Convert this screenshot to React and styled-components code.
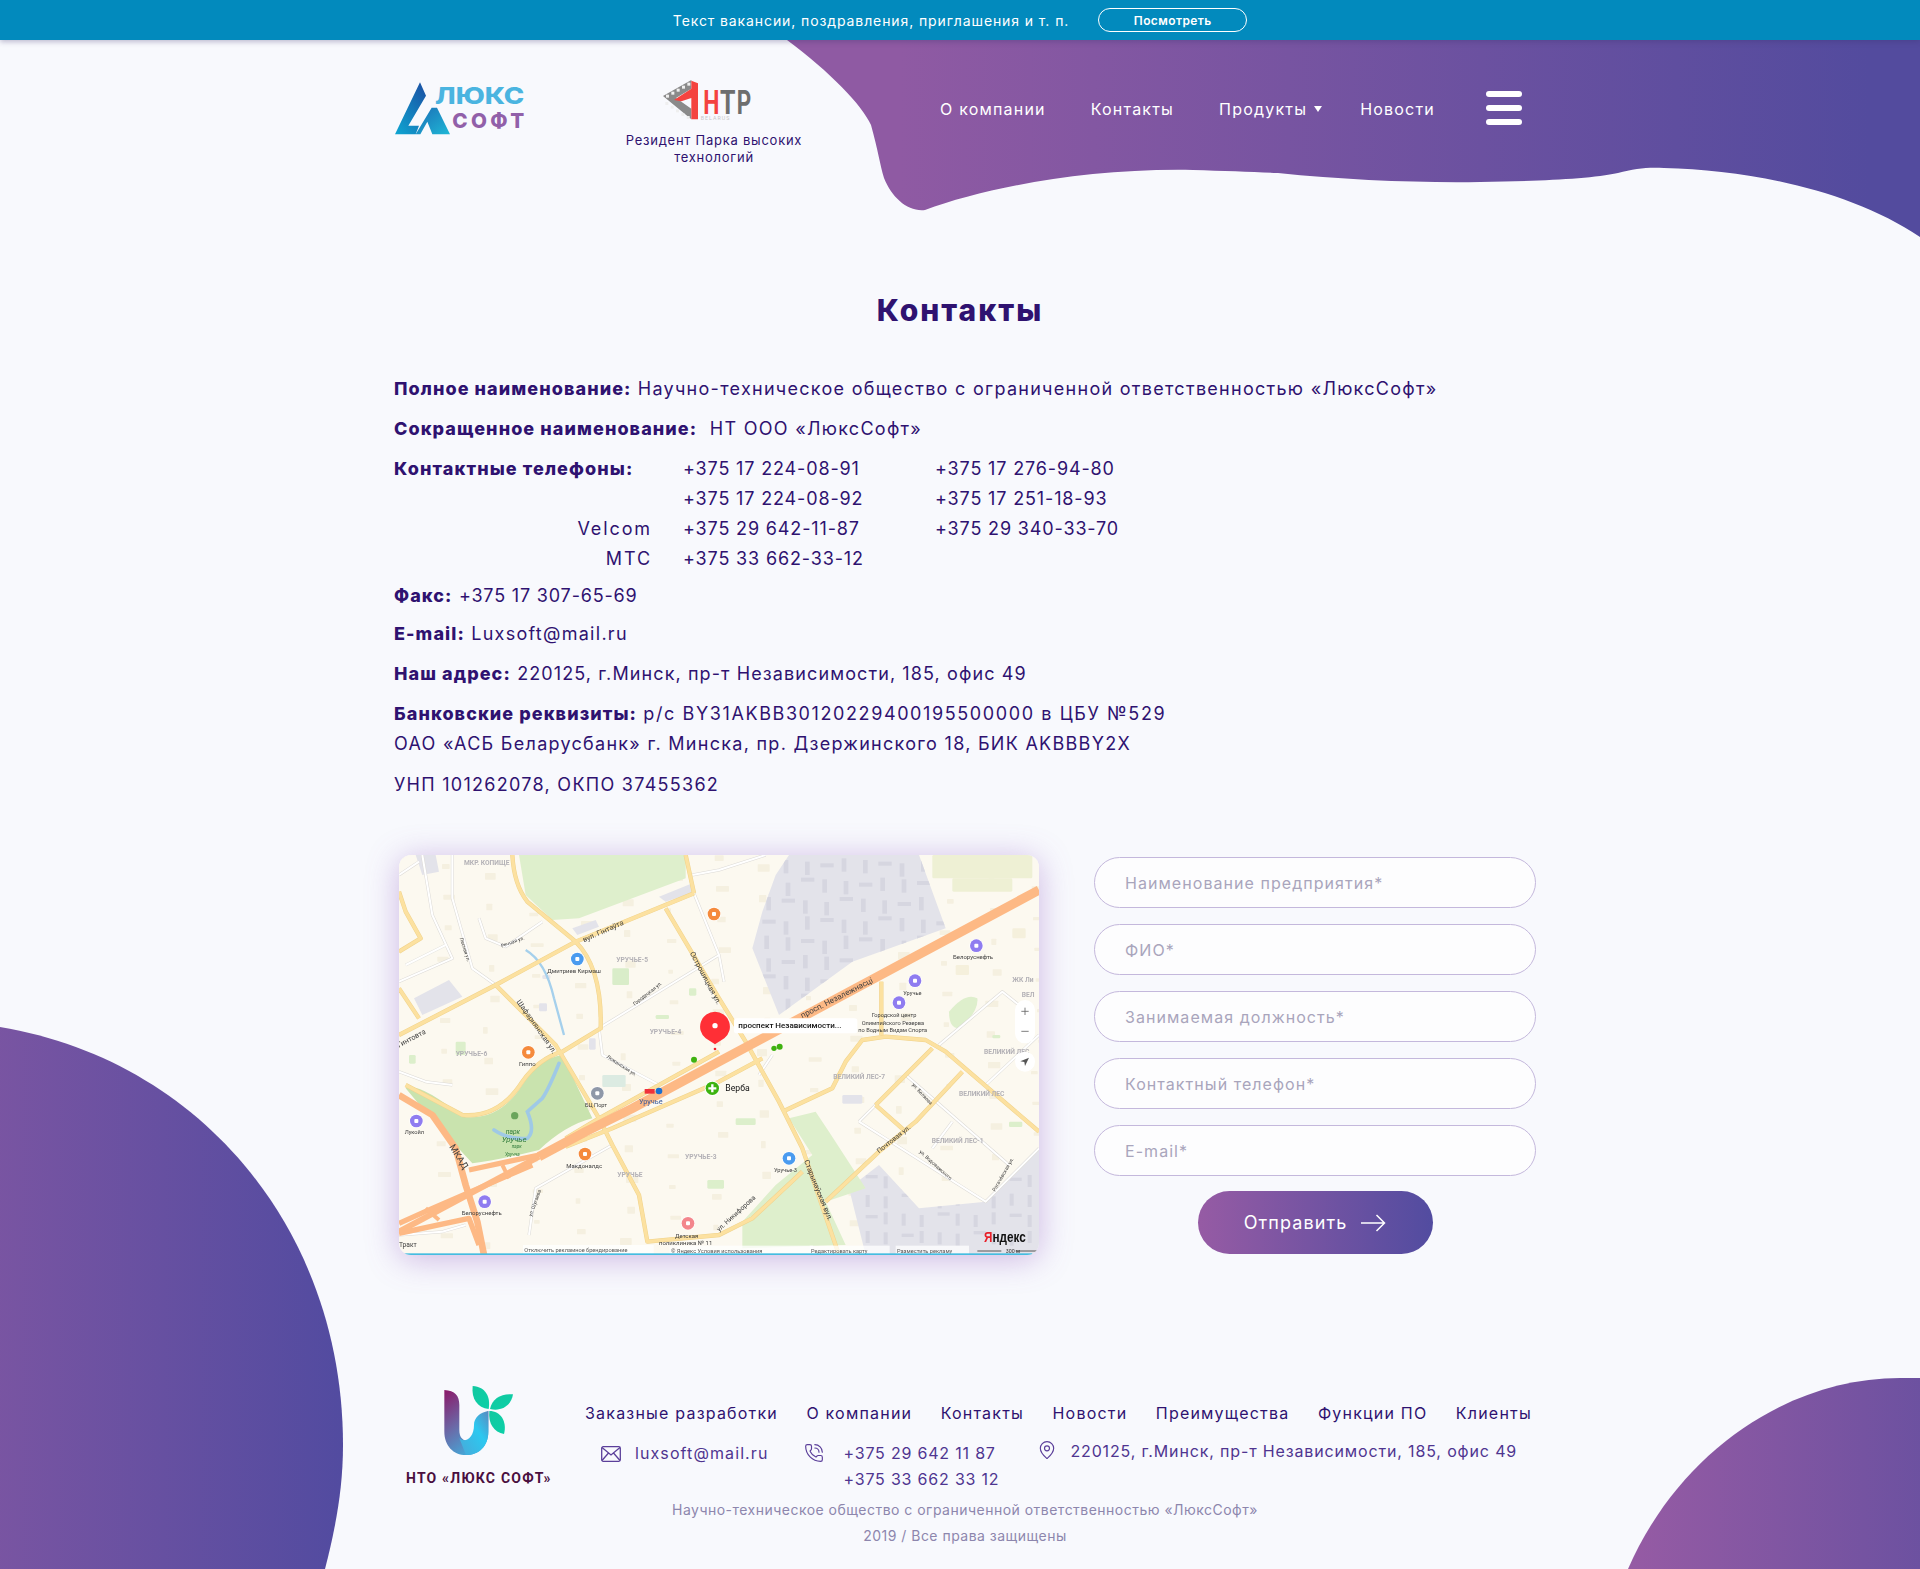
import React from "react";
import styled, { createGlobalStyle } from "styled-components";
import { PhoneCall, MapPin } from "lucide-react";

const GlobalStyle = createGlobalStyle`
  * { box-sizing: border-box; }
  body {
    margin: 0;
    background: #f8f9fd;
    font-family: Inter, "Noto Sans", sans-serif;
    color: #2f1270;
  }
`;

const Page = styled.div`
  position: relative;
  min-height: 1569px;
  overflow: hidden;
`;

const TopBar = styled.div`
  position: relative;
  z-index: 3;
  height: 40px;
  background: #028abd;
  box-shadow: 0 2px 5px rgba(60, 50, 110, 0.3);
  display: flex;
  align-items: center;
  justify-content: center;
  color: #fff;
  font-size: 14px;
  letter-spacing: 0.9px;
`;

const WatchButton = styled.a`
  margin-left: 29px;
  width: 149px;
  height: 24px;
  border: 1px solid #fff;
  border-radius: 12px;
  font-size: 12px;
  font-weight: 600;
  letter-spacing: 0.4px;
  display: flex;
  align-items: center;
  justify-content: center;
`;

const Backdrop = styled.svg`
  position: absolute;
  left: 0;
  top: 0;
  z-index: 0;
`;

const Container = styled.div`
  position: relative;
  z-index: 1;
  width: 1132px;
  margin: 0 auto;
`;

const Header = styled.header`
  height: 170px;
  padding-top: 35px;
  display: flex;
  align-items: flex-start;
`;

const LogoSvg = styled.svg`
  flex: none;
  margin-left: 1px;
`;

const Resident = styled.div`
  flex: none;
  width: 200px;
  margin-left: 79px;
  text-align: center;
  font-size: 13px;
  line-height: 17px;
  letter-spacing: 0.75px;
  color: #2f1270;
  svg { display: block; margin: -3px 0 4px 34px; }
`;

const Nav = styled.nav`
  display: flex;
  align-items: center;
  margin-left: 126px;
  margin-top: 19px;
  height: 30px;
  color: #fff;
  font-size: 16px;
  letter-spacing: 1.2px;
  white-space: nowrap;
`;

const NavLink = styled.a`
  display: flex;
  align-items: center;
  margin-right: ${(p) => p.$gap}px;
`;

const Caret = styled.i`
  display: block;
  margin-left: 7px;
  width: 0;
  height: 0;
  border-left: 4px solid transparent;
  border-right: 4px solid transparent;
  border-top: 6px solid #fff;
`;

const Burger = styled.div`
  flex: none;
  margin-left: 51px;
  margin-top: -3px;
  width: 36px;
  display: flex;
  flex-direction: column;
  gap: 8px;
  i {
    display: block;
    height: 6px;
    border-radius: 3px;
    background: #fff;
  }
`;

const Title = styled.h1`
  margin: 80px 0 44px;
  height: 40px;
  line-height: 40px;
  font-size: 30px;
  font-weight: 800;
  letter-spacing: 2px;
  text-align: center;
  color: #2f1270;
`;

const Line = styled.p`
  margin: ${(p) => p.$gap || 0}px 0 0;
  font-size: 18px;
  line-height: 30px;
  letter-spacing: 1.28px;
  white-space: nowrap;
  b { font-weight: 800; letter-spacing: 1.08px; }
`;

const Digits = styled.span`
  letter-spacing: ${(p) => p.$ls ?? 0.82}px;
`;

const PhoneGrid = styled.div`
  margin-top: 10px;
  display: grid;
  grid-template-columns: 289px 252px 1fr;
  font-size: 18px;
  line-height: 30px;
  letter-spacing: 0.85px;
  b { font-weight: 800; letter-spacing: 1.12px; white-space: nowrap; }
`;

const Operator = styled.span`
  padding-right: 31px;
  text-align: right;
  letter-spacing: 1.9px;
`;

const ContactRow = styled.div`
  margin-top: 55px;
  margin-left: 5px;
  width: 1137px;
  display: flex;
  justify-content: space-between;
`;

const MapBox = styled.div`
  width: 640px;
  height: 400px;
  border-radius: 12px;
  overflow: hidden;
  box-shadow: 0 4px 32px rgba(143, 90, 190, 0.42);
  svg { display: block; filter: blur(0.45px); }
`;

const Form = styled.form`
  width: 442px;
  padding-top: 2px;
  display: flex;
  flex-direction: column;
  gap: 16px;
`;

const Input = styled.input`
  width: 100%;
  height: 51px;
  padding: 0 30px;
  background: #fdfdfe;
  border: 1px solid #c4b8dc;
  border-radius: 26px;
  font: 400 16px Inter, sans-serif;
  letter-spacing: 1.05px;
  outline: none;
  &::placeholder { color: #a9a5bc; opacity: 1; }
`;

const Submit = styled.button`
  align-self: center;
  margin-top: -1px;
  width: 235px;
  height: 63px;
  border: 0;
  border-radius: 32px;
  background: linear-gradient(90deg, #965ba4, #524ca0);
  color: #fff;
  font: 400 18px Inter, sans-serif;
  letter-spacing: 1.1px;
  display: flex;
  align-items: center;
  justify-content: center;
  gap: 14px;
`;

const Footer = styled.footer`
  margin-top: 120px;
  height: 122px;
  display: flex;
`;

const Brand = styled.div`
  flex: none;
  width: 191px;
  padding-left: 6px;
  svg { display: block; }
`;

const BrandName = styled.div`
  width: 170px;
  margin-top: -30px;
  padding-left: 6px;
  font-family: Roboto, sans-serif;
  font-size: 14px;
  font-weight: 700;
  letter-spacing: 1.2px;
  color: #4a0f3f;
  white-space: nowrap;
`;

const FooterBody = styled.div`
  flex: none;
  width: 947px;
  padding-top: 26px;
`;

const FooterNav = styled.div`
  display: flex;
  justify-content: space-between;
  line-height: 24px;
  font-size: 16px;
  letter-spacing: 1.2px;
`;

const FooterContacts = styled.div`
  margin-top: 15px;
  display: flex;
  color: #4f3590;
  font-size: 16px;
  line-height: 26px;
  letter-spacing: 0.85px;
  white-space: nowrap;
`;

const ContactItem = styled.div`
  display: flex;
  align-items: flex-start;
  margin-left: ${(p) => p.$left}px;
  margin-top: ${(p) => p.$top || 0}px;
  gap: ${(p) => p.$gap}px;
  letter-spacing: ${(p) => p.$ls ?? 0.85}px;
  svg { flex: none; margin-top: ${(p) => p.$iconTop || 0}px; }
`;

const Copyright = styled.div`
  padding-left: 10px;
  text-align: center;
  color: #8d86ad;
  font-size: 14px;
  line-height: 26px;
  letter-spacing: 0.48px;
`;

// map data, in 3x units of the 640x400 picture
const path = (pts) => "M" + pts.map((p) => p.join(" ")).join("L");

const GRAY_MAIN = "M1090 170L1130 60L1170 0H1560L1640 220L1360 320L1140 480L1060 280Z";
const GRAY_LOW = "M1350 1000L1440 930L1560 1060L1760 1040L1920 880V1200H1400Z";

const texture = Array.from({ length: 170 }, (_, i) => ({
  x: (i * 137) % 1920,
  y: (i * 211) % 1200,
  w: 14 + ((i * 7) % 26),
  h: 10 + ((i * 5) % 14),
}));
const factoryRows = Array.from({ length: 90 }, (_, i) => ({
  x: 1090 + (i % 10) * 58 + (i % 3) * 6,
  y: 10 + Math.floor(i / 10) * 58 + (i % 4) * 5,
  w: i % 3 === 0 ? 40 : 14,
  h: i % 3 === 0 ? 12 : 40,
}));
const factoryLow = Array.from({ length: 40 }, (_, i) => ({
  x: 1400 + (i % 10) * 54,
  y: 960 + Math.floor(i / 10) * 56 + (i % 3) * 4,
  w: i % 4 === 0 ? 36 : 12,
  h: i % 4 === 0 ? 10 : 36,
}));
const grayZones = [
  GRAY_MAIN,
  GRAY_LOW,
  "M70 60L120 50L110 0H50Z",
  "M45 430L150 375L190 425L70 480Z",
  "M780 125L880 85L890 110L800 140Z",
  "M520 220L590 195L600 215L535 240Z",
];
const greenZones = [
  "M360 0H860V70L540 190L460 195L380 120Z",
  "M1170 790L1250 770L1290 830L1400 1000L1280 1040L1340 1170L1030 1180V1100L1130 990L1240 900Z",
  "M1650 470Q1700 410 1735 430Q1740 470 1680 520Q1650 520 1650 470Z",
];
const paleBlocks = [
  [640, 340, 50, 50, "#d9edc9"], [170, 560, 30, 40, "#dcefcb"], [30, 600, 20, 26, "#dcefcb"],
  [770, 480, 40, 12, "#dcefcb"], [870, 400, 22, 22, "#dcefcb"], [1010, 790, 60, 20, "#dcefcb"],
  [925, 975, 50, 26, "#dcefcb"], [610, 660, 70, 36, "#dcebe2"], [570, 550, 20, 34, "#e3e3ea"],
  [1780, 540, 24, 10, "#dcefcb"], [1830, 800, 40, 16, "#dcefcb"], [1330, 720, 60, 26, "#e3e3ea"],
  [1600, 0, 300, 70, "#eef0d4"], [1660, 70, 180, 40, "#eef0d4"], [1840, 220, 40, 30, "#f5f0dc"],
  [1670, 330, 40, 30, "#f5f0dc"], [430, 360, 24, 12, "#e5e5ea"], [420, 445, 24, 24, "#e3e3ea"],
];
const streets = [
  [[160, 0], [160, 130], [220, 340], [290, 390]],
  [[70, 0], [100, 180], [160, 310], [0, 380]],
  [[240, 190], [260, 250], [320, 275], [430, 200]],
  [[600, 520], [610, 600], [780, 690]],
  [[600, 520], [960, 300]],
  [[390, 1140], [410, 1000], [640, 870]],
  [[0, 1140], [130, 1130], [200, 1110]],
  [[880, 60], [960, 45], [1100, 0]],
  [[885, 115], [960, 300], [975, 380]],
  [[1380, 800], [1520, 660], [1830, 930]],
  [[1380, 800], [1760, 1040], [1920, 880]],
  [[1600, 880], [1660, 800]],
  [[1620, 570], [1810, 410], [1860, 450]],
  [[1760, 690], [1920, 540]],
  [[1080, 660], [1120, 600]],
  [[0, 650], [80, 680], [160, 690]],
  [[20, 330], [140, 270]],
  [[0, 60], [60, 20]],
];
const roads = [
  [[0, 540], [290, 390], [530, 260], [885, 115]],
  [[860, 0], [885, 115]],
  [[800, 160], [960, 430], [1040, 560], [1140, 740], [1210, 880], [1320, 1200]],
  [[290, 390], [470, 570], [600, 790], [640, 870], [720, 1020], [745, 1160], [960, 1140], [1060, 1090], [1210, 950]],
  [[1150, 770], [1300, 700], [1340, 620], [1390, 555], [1460, 545], [1580, 555], [1640, 590], [1920, 830]],
  [[1430, 750], [1600, 580]],
  [[1430, 750], [1520, 830]],
  [[1690, 650], [1550, 800], [1440, 890], [1280, 1040]],
  [[1447, 380], [1447, 540]],
  [[500, 850], [600, 790], [960, 590]],
  [[500, 875], [640, 820], [960, 680], [1090, 610]],
  [[0, 290], [65, 250], [20, 170], [0, 110]],
  [[0, 400], [60, 490]],
];
const curvedRoad = "M340 0Q345 90 385 140L530 260Q610 340 605 520L490 590Q420 610 370 680Q300 790 190 780L20 690";
const highways = [
  { w: 28, pts: [[1920, 105], [960, 620], [700, 760], [560, 830], [420, 905]] },
  { w: 18, pts: [[420, 905], [0, 1130]] },
  { w: 16, pts: [[400, 930], [100, 1060], [0, 1105]] },
  { w: 20, pts: [[0, 720], [100, 780], [170, 880], [200, 990], [235, 1100], [255, 1200]] },
  { w: 16, pts: [[210, 945], [420, 900]] },
  { w: 16, pts: [[0, 1135], [210, 1090], [240, 1170]] },
  { w: 12, pts: [[310, 930], [330, 970]] },
  { w: 12, pts: [[80, 1060], [120, 1095]] },
];
const river = "M380 285Q440 320 465 430L495 540";
const parkRiver = "M480 625Q450 700 430 730L385 770Q410 830 385 850Q330 855 285 825";
const poi = [
  [388, 592, "#f58a3c"], [535, 312, "#4a9bef"], [595, 715, "#8f98a8"], [52, 798, "#8f7cf0"],
  [558, 897, "#f58a3c"], [257, 1040, "#8f7cf0"], [867, 1105, "#f3868c"], [945, 177, "#f58a3c"],
  [1170, 910, "#4a9bef"], [1732, 272, "#8f7cf0"], [1548, 377, "#8f7cf0"], [1500, 443, "#8f7cf0"],
];
const districts = [
  ["МКР. КОПИЩЕ", 195, 30], ["УРУЧЬЕ-5", 652, 322], ["УРУЧЬЕ-4", 752, 537], ["УРУЧЬЕ-6", 170, 603],
  ["УРУЧЬЕ", 655, 967], ["УРУЧЬЕ-3", 858, 912], ["ВЕЛИКИЙ ЛЕС-7", 1303, 672], ["ВЕЛИКИЙ ЛЕС", 1755, 598],
  ["ВЕЛИКИЙ ЛЕС", 1680, 724], ["ВЕЛИКИЙ ЛЕС-1", 1598, 865], ["ВЕЛ", 1868, 425], ["ЖК Ли", 1840, 382],
];
const labels = [
  ["вул. Гінтаўта", 555, 262, 22, -24],
  ["Дмитриев Кирмаш", 445, 355, 18],
  ["Речная ул.", 308, 278, 15, -20],
  ["Лесная ул.", 182, 250, 15, 72],
  ["Шафарнянская ул.", 352, 440, 22, 55],
  ["Городецкая ул.", 707, 452, 15, -38],
  ["Острошицкая ул.", 872, 295, 22, 62],
  ["Гиппо", 360, 632, 18],
  ["Ложинская ул.", 622, 608, 15, 33],
  ["БЦ Порт", 558, 757, 17],
  ["Лукойл", 17, 836, 17],
  ["МКАД", 150, 875, 28, 58],
  ["Макдоналдс", 502, 940, 18],
  ["ул. Шугаева", 398, 1085, 15, -70],
  ["Белоруснефть", 188, 1080, 18],
  ["Гинтовта", 0, 578, 22, -28],
  ["Тракт", 0, 1177, 20],
  ["Детская", 828, 1150, 18],
  ["поликлиника № 11", 780, 1170, 18],
  ["просп. Незалежнасці", 1210, 490, 24, -27],
  ["Уручье", 1513, 420, 17],
  ["Белоруснефть", 1662, 313, 18],
  ["Городской центр", 1418, 487, 17],
  ["Олимпийского Резерва", 1388, 510, 17],
  ["по Водным Видам Спорта", 1378, 532, 17],
  ["ул. Беляева", 1538, 690, 15, 47],
  ["Почтовая ул.", 1440, 895, 20, -38],
  ["ул. Водоважского", 1560, 892, 15, 42],
  ["Рогачёвская ул.", 1788, 1010, 15, -60],
  ["Старынаўская вул.", 1215, 918, 22, 68],
  ["ул. Никифорова", 960, 1130, 20, -42],
  ["Уручье-3", 1125, 952, 17],
];
const parkLabels = [
  ["парк", 320, 836, 20], ["Уручье", 308, 862, 24], ["парк", 338, 880, 14], ["Уручча", 318, 902, 14],
];
const legal = [
  ["Отключить рекламное брендирование", 372, 1170, 392],
  ["© Яндекс Условия использования", 812, 1172, 430],
  ["Редактировать карту", 1232, 1172, 240],
  ["Разместить рекламу", 1490, 1172, 220],
];
// small squares of the checkered frame of the HTP mark
const htpSquares = [
  [54, 68], [70, 59], [86, 50], [102, 41], [118, 32],
  [52, 90], [68, 101], [84, 112], [100, 123], [116, 132],
];

function CityMap() {
  return (
    <svg width="640" height="400" viewBox="0 0 1920 1200" fontFamily="Roboto, sans-serif">
      <defs>
        <clipPath id="mainYard"><path d={GRAY_MAIN} /></clipPath>
        <clipPath id="lowYard"><path d={GRAY_LOW} /></clipPath>
      </defs>
      <rect width="1920" height="1200" fill="#fcf9f0" />
      {texture.map((t) => <rect key={`${t.x}-${t.y}`} x={t.x} y={t.y} width={t.w} height={t.h} rx="2" fill="#f5f0e0" />)}
      {grayZones.map((d) => <path key={d} d={d} fill="#e3e3ea" />)}
      <g clipPath="url(#mainYard)">
        {factoryRows.map((t) => <rect key={`${t.x}-${t.y}`} x={t.x} y={t.y} width={t.w} height={t.h} fill="#d6d6e0" />)}
      </g>
      <g clipPath="url(#lowYard)">
        {factoryLow.map((t) => <rect key={`${t.x}-${t.y}`} x={t.x} y={t.y} width={t.w} height={t.h} fill="#d6d6e0" />)}
      </g>
      {greenZones.map((d) => <path key={d} d={d} fill="#deefcc" />)}
      <path d="M20 700Q60 680 190 785Q300 800 370 690Q420 610 490 600L580 790Q500 810 420 885Q300 915 220 925Q150 850 70 760Z" fill="#c9e3ae" />
      {paleBlocks.map(([x, y, w, h, c]) => <rect key={`${x}-${y}`} x={x} y={y} width={w} height={h} rx="4" fill={c} />)}
      <path d={river} fill="none" stroke="#a5d0ec" strokeWidth="7" />
      <path d={parkRiver} fill="none" stroke="#9fc9e6" strokeWidth="11" strokeLinecap="round" />
      {streets.map((s, i) => <path key={i} d={path(s)} fill="none" stroke="#dcdad6" strokeWidth="9" strokeLinejoin="round" />)}
      {streets.map((s, i) => <path key={i} d={path(s)} fill="none" stroke="#fff" strokeWidth="6" strokeLinejoin="round" />)}
      <path d={curvedRoad} fill="none" stroke="#f0d38c" strokeWidth="13" />
      {roads.map((r, i) => <path key={i} d={path(r)} fill="none" stroke="#f0d38c" strokeWidth="13" strokeLinejoin="round" />)}
      <path d={curvedRoad} fill="none" stroke="#fce1a0" strokeWidth="10" />
      {roads.map((r, i) => <path key={i} d={path(r)} fill="none" stroke="#fce1a0" strokeWidth="10" strokeLinejoin="round" />)}
      {highways.map((h, i) => <path key={i} d={path(h.pts)} fill="none" stroke="#fdb985" strokeWidth={h.w} strokeLinejoin="round" />)}
      {poi.map(([x, y, c]) => (
        <g key={`${x}-${y}`}>
          <circle cx={x} cy={y} r="21" fill="#fff" />
          <circle cx={x} cy={y} r="19" fill={c} />
          <rect x={x - 6} y={y - 6} width="12" height="12" rx="3" fill="#fff" />
        </g>
      ))}
      {districts.map(([t, x, y]) => (
        <text key={`${t}-${x}`} x={x} y={y} fontSize="20" fontWeight="700" fill="#b3b1b6">{t}</text>
      ))}
      {labels.map(([t, x, y, s, r]) => (
        <text key={`${t}-${x}`} x={x} y={y} fontSize={s} fill="#3d3d3d" transform={r ? `rotate(${r} ${x} ${y})` : undefined}>{t}</text>
      ))}
      {parkLabels.map(([t, x, y, s]) => (
        <text key={`${t}-${y}`} x={x} y={y} fontSize={s} fontStyle="italic" fill="#2f7a3a">{t}</text>
      ))}
      <circle cx="347" cy="782" r="11" fill="#6aa55c" />
      <rect x="737" y="702" width="30" height="14" fill="#f0323c" />
      <circle cx="780" cy="708" r="10" fill="#1c6fd0" />
      <text x="720" y="746" fontSize="22" fill="#3a5a9a">Уручье</text>
      <circle cx="885" cy="614" r="9" fill="#3fb210" />
      <circle cx="1125" cy="580" r="8" fill="#3fb210" />
      <circle cx="1142" cy="575" r="9" fill="#3fb210" />

      <rect x="1005" y="490" width="370" height="45" rx="8" fill="#fff" />
      <text x="1018" y="520" fontSize="24" fontWeight="500" fill="#111">проспект Независимости...</text>
      <path d="M948 470a45 45 0 0 1 28 80l-28 18-28-18a45 45 0 0 1 28-80Z" fill="#ff2f36" />
      <circle cx="948" cy="512" r="8" fill="#fff" />
      <circle cx="948" cy="582" r="4" fill="#f0242c" />

      <circle cx="940" cy="700" r="23" fill="#fff" />
      <circle cx="940" cy="700" r="20" fill="#3cb30f" />
      <path d="M940 688v24M928 700h24" stroke="#fff" strokeWidth="7" />
      <text x="979" y="708" fontSize="26" fill="#111">Верба</text>

      <rect x="1848" y="435" width="60" height="130" rx="30" fill="#fff" />
      <path d="M1878 458v22M1867 469h22M1867 529h22" stroke="#666" strokeWidth="2.5" />
      <circle cx="1878" cy="620" r="30" fill="#fff" />
      <path d="M1890 608l-26 11 12 2 2 12Z" fill="#555" />

      <text x="1755" y="1160" fontSize="46" fontWeight="700" fontFamily="'Liberation Sans', sans-serif" textLength="125" lengthAdjust="spacingAndGlyphs">
        <tspan fill="#e8202a">Я</tspan>
        <tspan fill="#111">ндекс</tspan>
      </text>
      {legal.map(([t, x, y, w]) => (
        <g key={t}>
          <rect x={x} y={y} width={w} height="28" fill="#fff" fillOpacity="0.75" />
          <text x={x + 4} y={y + 22} fontSize="17" fill="#555">{t}</text>
        </g>
      ))}
      <path d="M1735 1188h72M1850 1188h70" stroke="#555" strokeWidth="3" />
      <text x="1820" y="1194" fontSize="16" fill="#333">300 м</text>
      <rect y="1195" width="1900" height="5" fill="#45bde0" />
    </svg>
  );
}

function LuxLogo() {
  return (
    <LogoSvg width="140" height="70" viewBox="0 0 420 210">
      <defs>
        <linearGradient id="luxA" x1="0.8" y1="0" x2="0.1" y2="1">
          <stop offset="0" stopColor="#1a55a6" />
          <stop offset="1" stopColor="#0fa3d0" />
        </linearGradient>
        <linearGradient id="luxB" x1="0" y1="0" x2="1" y2="1">
          <stop offset="0" stopColor="#1b6db6" />
          <stop offset="1" stopColor="#1fb8d6" />
        </linearGradient>
      </defs>
      <path d="M75 22L93 62 40 152H72L62 178H0Z" fill="url(#luxA)" />
      <path d="M62 178L110 98H126L165 178H112L97 140 76 178Z" fill="url(#luxB)" />
      <text x="120" y="88" fontFamily="Inter, sans-serif" fontWeight="800" fontSize="70" fill="#4ab4e0" textLength="268" lengthAdjust="spacingAndGlyphs">ЛЮКС</text>
      <text x="172" y="160" fontFamily="Inter, sans-serif" fontWeight="800" fontSize="62" fill="#9160a9" textLength="216">СОФТ</text>
    </LogoSvg>
  );
}

function HtpLogo() {
  return (
    <svg width="115" height="56" viewBox="0 0 345 168">
      <path d="M45 72L130 24V50L84 78 130 110V142Z" fill="#8a8a8a" />
      {htpSquares.map(([x, y]) => <rect key={`${x}-${y}`} x={x} y={y} width="9" height="9" fill="#efefef" />)}
      <path d="M130 26L150 34V142H130V78L100 88 78 84 130 50Z" fill="#f4433f" />
      <text x="166" y="126" fontFamily="Roboto, sans-serif" fontWeight="700" fontSize="98" fill="#f4433f" textLength="49" lengthAdjust="spacingAndGlyphs">Н</text>
      <text x="216" y="126" fontFamily="Roboto, sans-serif" fontWeight="700" fontSize="98" fill="#6e6e6e" textLength="47" lengthAdjust="spacingAndGlyphs">Т</text>
      <text x="266" y="126" fontFamily="Roboto, sans-serif" fontWeight="700" fontSize="98" fill="#6e6e6e" textLength="44" lengthAdjust="spacingAndGlyphs">Р</text>
      <text x="158" y="143" fontFamily="Roboto, sans-serif" fontSize="16" letterSpacing="3" fill="#c8c8c8">BELARUS</text>
    </svg>
  );
}

function FooterLogo() {
  return (
    <svg width="170" height="125" viewBox="0 0 510 375">
      <defs>
        <linearGradient id="uGrad" x1="0" y1="0" x2="0.5" y2="1">
          <stop offset="0" stopColor="#8c1868" />
          <stop offset="0.55" stopColor="#6a6aa8" />
          <stop offset="1" stopColor="#45a8d8" />
        </linearGradient>
        <linearGradient id="uRight" x1="0" y1="1" x2="1" y2="0">
          <stop offset="0" stopColor="#4aa8d8" />
          <stop offset="0.6" stopColor="#2cc8f0" />
          <stop offset="1" stopColor="#5a8ac0" />
        </linearGradient>
        <linearGradient id="leafGrad" x1="0" y1="0" x2="1" y2="1">
          <stop offset="0" stopColor="#12c8a0" />
          <stop offset="1" stopColor="#0cd0a8" />
        </linearGradient>
      </defs>
      <path d="M133 45C165 47 178 62 178 90V165C178 190 190 198 208 198 232 198 222 130 265 108V170C265 215 235 240 198 240 160 240 133 212 133 170Z" fill="url(#uGrad)" />
      <path d="M178 190C195 205 222 190 222 150 222 128 240 112 265 108V170C265 215 235 240 198 240Z" fill="url(#uRight)" />
      <path d="M218 33C258 36 272 66 266 102 232 98 214 72 218 33Z" fill="url(#leafGrad)" />
      <path d="M270 102C276 70 305 54 339 58 334 92 305 110 270 102Z" fill="url(#leafGrad)" />
      <path d="M268 108C302 108 322 140 312 177 282 172 264 146 268 108Z" fill="url(#leafGrad)" />
    </svg>
  );
}

function MailIcon() {
  return (
    <svg width="20" height="16" viewBox="0 0 20 16" fill="none" stroke="#5b3f9a" strokeWidth="1.3">
      <rect x="0.7" y="0.7" width="18.6" height="14.6" rx="1.5" />
      <path d="M1 1.5L10 9l9-7.5M1 14.5l6.5-7.5M19 14.5L12.5 7" />
    </svg>
  );
}

function ArrowIcon() {
  return (
    <svg width="25" height="18" viewBox="0 0 25 18" fill="none" stroke="#fff" strokeWidth="1.5">
      <path d="M0 9h23.5M15.5 1l8 8-8 8" />
    </svg>
  );
}

const fields = ["Наименование предприятия*", "ФИО*", "Занимаемая должность*", "Контактный телефон*", "E-mail*"];
const footerLinks = ["Заказные разработки", "О компании", "Контакты", "Новости", "Преимущества", "Функции ПО", "Клиенты"];

export default function App() {
  return (
    <Page>
      <GlobalStyle />
      <TopBar>
        Текст вакансии, поздравления, приглашения и т. п.
        <WatchButton>Посмотреть</WatchButton>
      </TopBar>

      <Backdrop width="1920" height="1569" viewBox="0 0 1920 1569">
        <defs>
          <linearGradient id="waveGrad" gradientUnits="userSpaceOnUse" x1="900" y1="0" x2="1870" y2="0">
            <stop offset="0" stopColor="#8f5aa3" />
            <stop offset="1" stopColor="#534b9e" />
          </linearGradient>
          <linearGradient id="leftGrad" gradientUnits="userSpaceOnUse" x1="-200" y1="0" x2="343" y2="0">
            <stop offset="0" stopColor="#8f5aa3" />
            <stop offset="1" stopColor="#524ba0" />
          </linearGradient>
          <linearGradient id="rightGrad" gradientUnits="userSpaceOnUse" x1="1628" y1="0" x2="2100" y2="0">
            <stop offset="0" stopColor="#965ba4" />
            <stop offset="1" stopColor="#534b9e" />
          </linearGradient>
        </defs>
        <path
          d="M787 40C830 72 862 105 871 125C878 150 880 165 884 178C892 198 908 212 925 210C985 188 1085 168 1193 170C1225 171 1255 172 1278 173C1345 180 1420 183 1480 182C1540 181 1590 179 1618 173C1635 168 1650 167 1664 168C1750 170 1850 190 1920 237V40Z"
          fill="url(#waveGrad)"
        />
        <path d="M0 1027C200 1060 343 1230 343 1445C343 1490 335 1530 325 1569H0Z" fill="url(#leftGrad)" />
        <path d="M1628 1569C1680 1450 1790 1378 1900 1378H1920V1569Z" fill="url(#rightGrad)" />
      </Backdrop>

      <Container>
        <Header>
          <LuxLogo />
          <Resident>
            <HtpLogo />
            Резидент Парка высоких технологий
          </Resident>
          <Nav>
            <NavLink $gap={45}>О компании</NavLink>
            <NavLink $gap={45}>Контакты</NavLink>
            <NavLink $gap={38}>Продукты<Caret /></NavLink>
            <NavLink $gap={0}>Новости</NavLink>
            <Burger><i /><i /><i /></Burger>
          </Nav>
        </Header>

        <Title>Контакты</Title>

        <Line><b>Полное наименование:</b> Научно-техническое общество с ограниченной ответственностью «ЛюксСофт»</Line>
        <Line $gap={10}><b>Сокращенное наименование:</b>&nbsp; НТ ООО «ЛюксСофт»</Line>
        <PhoneGrid>
          <b>Контактные телефоны:</b>
          <span>+375 17 224-08-91</span>
          <span>+375 17 276-94-80</span>
          <span />
          <span>+375 17 224-08-92</span>
          <span>+375 17 251-18-93</span>
          <Operator>Velcom</Operator>
          <span>+375 29 642-11-87</span>
          <span>+375 29 340-33-70</span>
          <Operator>МТС</Operator>
          <span>+375 33 662-33-12</span>
          <span />
        </PhoneGrid>
        <Line $gap={7}><b>Факс:</b> <Digits>+375 17 307-65-69</Digits></Line>
        <Line $gap={8}><b>E-mail:</b> Luxsoft@mail.ru</Line>
        <Line $gap={10}><b>Наш адрес:</b> <Digits $ls={1.1}>220125, г.Минск, пр-т Независимости, 185, офис 49</Digits></Line>
        <Line $gap={10}><b>Банковские реквизиты:</b> <Digits $ls={1.6}>р/с BY31AKBB30120229400195500000 в ЦБУ №529</Digits></Line>
        <Line>ОАО «АСБ Беларусбанк» г. Минска, пр. Дзержинского 18, БИК AKBBBY2X</Line>
        <Line $gap={11}>УНП 101262078, ОКПО 37455362</Line>

        <ContactRow>
          <MapBox><CityMap /></MapBox>
          <Form>
            {fields.map((f) => <Input key={f} placeholder={f} />)}
            <Submit type="button">Отправить <ArrowIcon /></Submit>
          </Form>
        </ContactRow>

        <Footer>
          <Brand>
            <FooterLogo />
            <BrandName>НТО «ЛЮКС СОФТ»</BrandName>
          </Brand>
          <FooterBody>
            <FooterNav>
              {footerLinks.map((l) => <a key={l}>{l}</a>)}
            </FooterNav>
            <FooterContacts>
              <ContactItem $left={16} $gap={14} $iconTop={6} $ls={1.1}>
                <MailIcon />
                luxsoft@mail.ru
              </ContactItem>
              <ContactItem $left={35} $gap={20} $iconTop={3} $ls={0.8}>
                <PhoneCall size={20} color="#5b3f9a" strokeWidth={1.4} />
                <div>+375 29 642 11 87<br />+375 33 662 33 12</div>
              </ContactItem>
              <ContactItem $left={38} $top={-2} $gap={13} $iconTop={2}>
                <MapPin size={20} color="#5b3f9a" strokeWidth={1.4} />
                220125, г.Минск, пр-т Независимости, 185, офис 49
              </ContactItem>
            </FooterContacts>
          </FooterBody>
        </Footer>
        <Copyright>
          Научно-техническое общество с ограниченной ответственностью «ЛюксСофт»
          <br />
          2019 / Все права защищены
        </Copyright>
      </Container>
    </Page>
  );
}
